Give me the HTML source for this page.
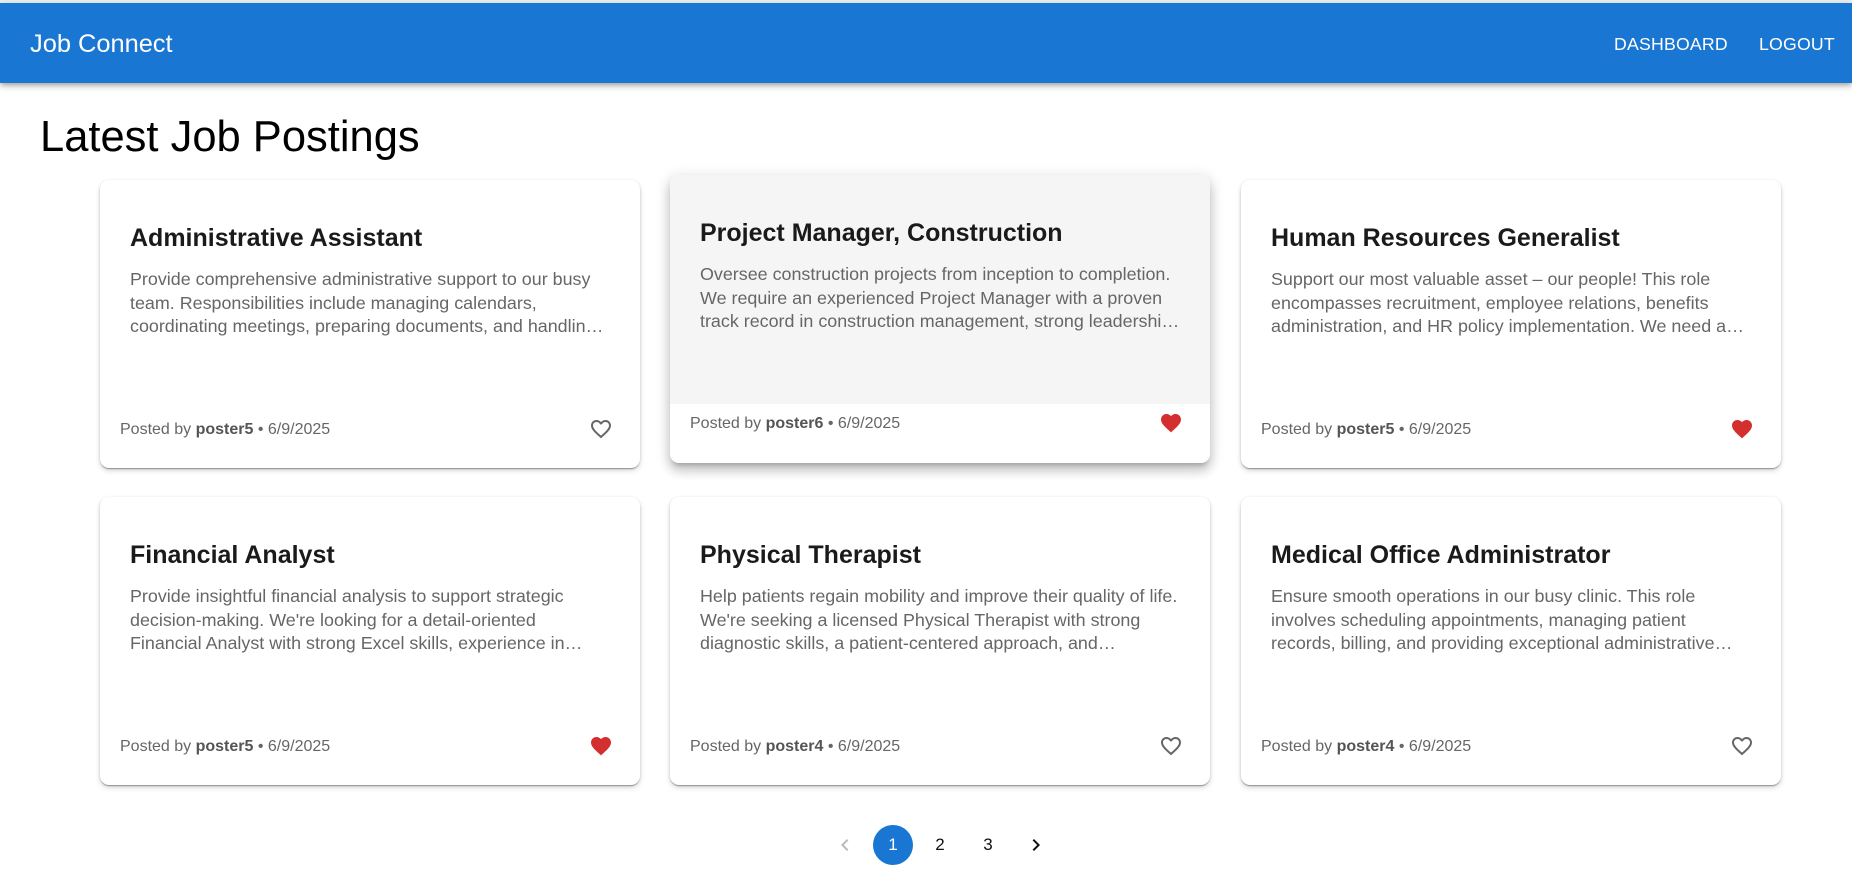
<!DOCTYPE html>
<html><head><meta charset="utf-8"><style>
*{margin:0;padding:0;box-sizing:border-box}
body{width:1852px;height:886px;background:#fff;font-family:"Liberation Sans",Arial,sans-serif;position:relative;overflow:hidden}
.top{position:absolute;left:0;top:0;width:1852px;height:3px;background:#eceff1}
.nav{position:absolute;left:0;top:3px;width:1852px;height:80px;background:#1976d2;box-shadow:0 2px 4px -1px rgba(0,0,0,.2),0 4px 5px 0 rgba(0,0,0,.14),0 1px 10px 0 rgba(0,0,0,.12);color:#fff}
.brand{position:absolute;left:30px;top:26px;font-size:25.4px;line-height:30px}
.link{position:absolute;top:30px;font-size:17.7px;line-height:22px;letter-spacing:.2px}
h1{position:absolute;left:40px;top:112px;font-size:43.5px;font-weight:400;line-height:50px;color:#000}
.card{position:absolute;width:540px;height:288px;background:#fff;border-radius:9px;box-shadow:0 2px 1px -1px rgba(0,0,0,.2),0 1px 1px 0 rgba(0,0,0,.14),0 1px 3px 0 rgba(0,0,0,.12),0 3px 6px rgba(0,0,0,.12);overflow:hidden}
.card.hov{box-shadow:0 5px 5px -3px rgba(0,0,0,.2),0 8px 10px 1px rgba(0,0,0,.14),0 3px 14px 2px rgba(0,0,0,.12)}
.hovbg{position:absolute;left:0;top:0;width:540px;height:229px;background:#f5f5f5}
.t{position:absolute;left:30px;top:44px;font-size:25px;line-height:29px;font-weight:700;color:#1a1a1a;white-space:nowrap}
.d{position:absolute;left:30px;top:88px;font-size:17.9px;line-height:23.6px;color:#666;white-space:nowrap}
.f{position:absolute;left:20px;top:240px;font-size:16px;line-height:20px;color:#666;white-space:nowrap}
.f b{color:#555}
.h{position:absolute;left:489px;top:237px;width:24px;height:24px}
.pg{position:absolute;top:825px;height:40px;line-height:40px;font-size:17px;text-align:center;color:#111}
</style></head><body>
<div class="top"></div>
<div class="nav"><div class="brand">Job Connect</div><div class="link" style="left:1614px">DASHBOARD</div><div class="link" style="left:1759px">LOGOUT</div></div>
<h1>Latest Job Postings</h1>

<div class="card" style="left:100px;top:180px">
<div class="t">Administrative Assistant</div>
<div class="d">Provide comprehensive administrative support to our busy<br>team. Responsibilities include managing calendars,<br>coordinating meetings, preparing documents, and handlin…</div>
<div class="f">Posted by <b>poster5</b> • 6/9/2025</div>
<svg class="h" viewBox="0 0 24 24"><path fill="#666" d="M16.5 3c-1.74 0-3.41.81-4.5 2.09C10.91 3.81 9.24 3 7.5 3 4.42 3 2 5.42 2 8.5c0 3.78 3.4 6.86 8.55 11.54L12 21.35l1.45-1.32C18.6 15.36 22 12.28 22 8.5 22 5.42 19.58 3 16.5 3zm-4.4 15.55l-.1.1-.1-.1C7.14 14.24 4 11.39 4 8.5 4 6.5 5.5 5 7.5 5c1.54 0 3.04.99 3.57 2.36h1.87C13.46 5.99 14.96 5 16.5 5c2 0 3.5 1.5 3.5 3.5 0 2.89-3.14 5.74-7.9 10.05z"/></svg>
</div>

<div class="card hov" style="left:670px;top:175px">
<div class="hovbg"></div>
<div class="t">Project Manager, Construction</div>
<div class="d">Oversee construction projects from inception to completion.<br>We require an experienced Project Manager with a proven<br>track record in construction management, strong leadershi…</div>
<div class="f" style="top:239px">Posted by <b>poster6</b> • 6/9/2025</div>
<svg class="h" style="top:236px" viewBox="0 0 24 24"><path fill="#d32f2f" d="M12 21.35l-1.45-1.32C5.4 15.36 2 12.28 2 8.5 2 5.42 4.42 3 7.5 3c1.74 0 3.41.81 4.5 2.09C13.09 3.81 14.76 3 16.5 3 19.58 3 22 5.42 22 8.5c0 3.78-3.4 6.86-8.55 11.54L12 21.35z"/></svg>
</div>

<div class="card" style="left:1241px;top:180px">
<div class="t">Human Resources Generalist</div>
<div class="d">Support our most valuable asset – our people! This role<br>encompasses recruitment, employee relations, benefits<br>administration, and HR policy implementation. We need a…</div>
<div class="f">Posted by <b>poster5</b> • 6/9/2025</div>
<svg class="h" viewBox="0 0 24 24"><path fill="#d32f2f" d="M12 21.35l-1.45-1.32C5.4 15.36 2 12.28 2 8.5 2 5.42 4.42 3 7.5 3c1.74 0 3.41.81 4.5 2.09C13.09 3.81 14.76 3 16.5 3 19.58 3 22 5.42 22 8.5c0 3.78-3.4 6.86-8.55 11.54L12 21.35z"/></svg>
</div>

<div class="card" style="left:100px;top:497px">
<div class="t">Financial Analyst</div>
<div class="d">Provide insightful financial analysis to support strategic<br>decision-making. We're looking for a detail-oriented<br>Financial Analyst with strong Excel skills, experience in…</div>
<div class="f">Posted by <b>poster5</b> • 6/9/2025</div>
<svg class="h" viewBox="0 0 24 24"><path fill="#d32f2f" d="M12 21.35l-1.45-1.32C5.4 15.36 2 12.28 2 8.5 2 5.42 4.42 3 7.5 3c1.74 0 3.41.81 4.5 2.09C13.09 3.81 14.76 3 16.5 3 19.58 3 22 5.42 22 8.5c0 3.78-3.4 6.86-8.55 11.54L12 21.35z"/></svg>
</div>

<div class="card" style="left:670px;top:497px">
<div class="t">Physical Therapist</div>
<div class="d">Help patients regain mobility and improve their quality of life.<br>We're seeking a licensed Physical Therapist with strong<br>diagnostic skills, a patient-centered approach, and…</div>
<div class="f">Posted by <b>poster4</b> • 6/9/2025</div>
<svg class="h" viewBox="0 0 24 24"><path fill="#666" d="M16.5 3c-1.74 0-3.41.81-4.5 2.09C10.91 3.81 9.24 3 7.5 3 4.42 3 2 5.42 2 8.5c0 3.78 3.4 6.86 8.55 11.54L12 21.35l1.45-1.32C18.6 15.36 22 12.28 22 8.5 22 5.42 19.58 3 16.5 3zm-4.4 15.55l-.1.1-.1-.1C7.14 14.24 4 11.39 4 8.5 4 6.5 5.5 5 7.5 5c1.54 0 3.04.99 3.57 2.36h1.87C13.46 5.99 14.96 5 16.5 5c2 0 3.5 1.5 3.5 3.5 0 2.89-3.14 5.74-7.9 10.05z"/></svg>
</div>

<div class="card" style="left:1241px;top:497px">
<div class="t">Medical Office Administrator</div>
<div class="d">Ensure smooth operations in our busy clinic. This role<br>involves scheduling appointments, managing patient<br>records, billing, and providing exceptional administrative…</div>
<div class="f">Posted by <b>poster4</b> • 6/9/2025</div>
<svg class="h" viewBox="0 0 24 24"><path fill="#666" d="M16.5 3c-1.74 0-3.41.81-4.5 2.09C10.91 3.81 9.24 3 7.5 3 4.42 3 2 5.42 2 8.5c0 3.78 3.4 6.86 8.55 11.54L12 21.35l1.45-1.32C18.6 15.36 22 12.28 22 8.5 22 5.42 19.58 3 16.5 3zm-4.4 15.55l-.1.1-.1-.1C7.14 14.24 4 11.39 4 8.5 4 6.5 5.5 5 7.5 5c1.54 0 3.04.99 3.57 2.36h1.87C13.46 5.99 14.96 5 16.5 5c2 0 3.5 1.5 3.5 3.5 0 2.89-3.14 5.74-7.9 10.05z"/></svg>
</div>

<svg style="position:absolute;left:833px;top:833px" width="24" height="24" viewBox="0 0 24 24"><path fill="#bbb" d="M15.41 7.41 14 6l-6 6 6 6 1.41-1.41L10.83 12z"/></svg>
<div class="pg" style="left:873px;width:40px;border-radius:50%;background:#1976d2;color:#fff">1</div>
<div class="pg" style="left:920px;width:40px">2</div>
<div class="pg" style="left:968px;width:40px">3</div>
<svg style="position:absolute;left:1024px;top:833px" width="24" height="24" viewBox="0 0 24 24"><path fill="#111" d="M10 6 8.59 7.41 13.17 12l-4.58 4.59L10 18l6-6z"/></svg>
</body></html>
